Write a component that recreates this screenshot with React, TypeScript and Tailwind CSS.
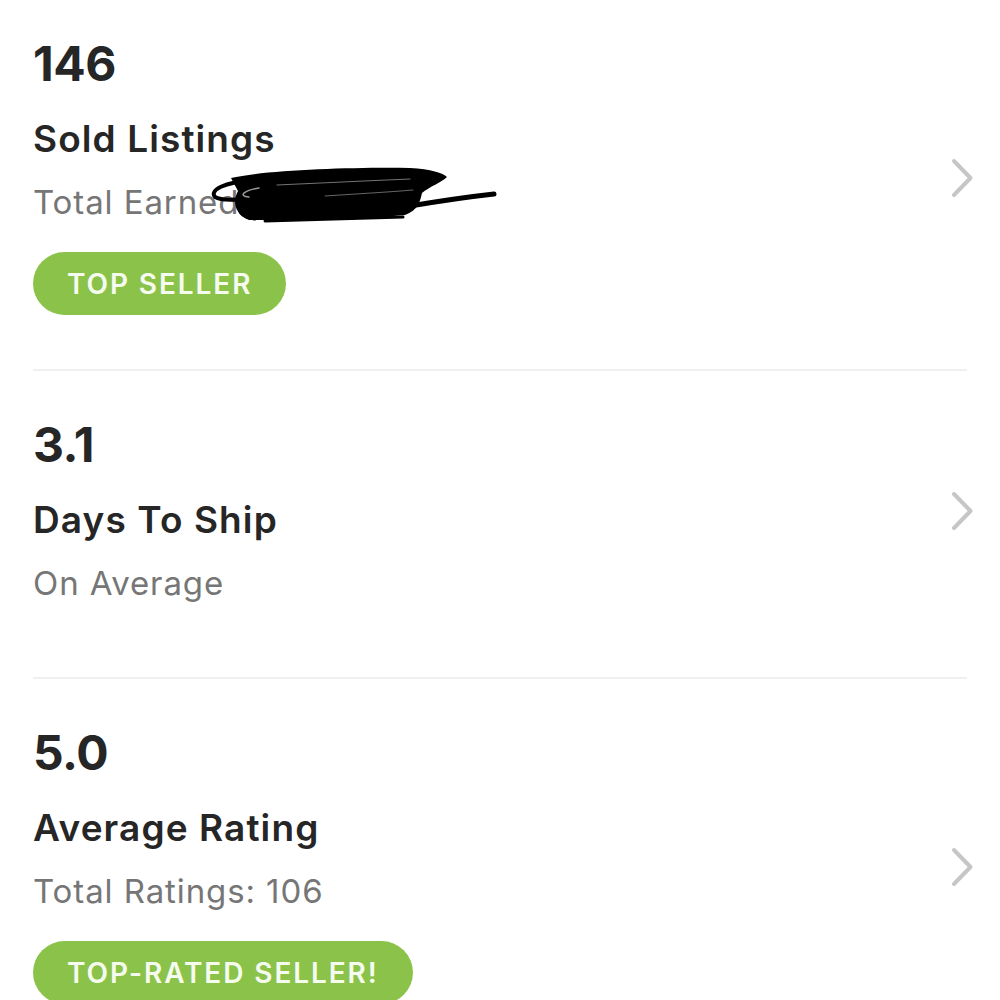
interface Stat {
  value: string;
  title: string;
  sub: string;
  badge?: string;
  redacted?: boolean;
}

const STATS: Stat[] = [
  { value: '146', title: 'Sold Listings', sub: 'Total Earned: $0', badge: 'TOP SELLER', redacted: true },
  { value: '3.1', title: 'Days To Ship', sub: 'On Average' },
  { value: '5.0', title: 'Average Rating', sub: 'Total Ratings: 106', badge: 'TOP-RATED SELLER!' },
];

// hand-drawn black redaction over the earnings amount
function Scribble() {
  return (
    <svg className="pointer-events-none absolute left-[172px] top-[-22px]" width="295" height="62" viewBox="0 0 295 62" fill="none">
      <path
        d="M26 14 C 60 6, 150 3, 205 4 C 226 5, 238 9, 242 13 C 237 18, 224 23, 217 29 C 215 38, 213 46, 200 51 C 160 55, 90 57, 44 56 C 30 50, 27 38, 33 27 Z"
        fill="#000"
      />
      <path d="M46 17 C 20 18, 4 26, 10 33 C 20 39, 52 34, 84 26" stroke="#000" strokeWidth="4" strokeLinecap="round" />
      <path d="M40 40 C 32 46, 36 52, 50 54" stroke="#000" strokeWidth="5" strokeLinecap="round" />
      <path d="M54 24 C 40 26, 32 32, 44 33" stroke="#fff" strokeWidth="1.5" strokeLinecap="round" opacity="0.6" />
      <path d="M72 21 C 110 19, 160 17, 205 15" stroke="#fff" strokeWidth="1.2" strokeLinecap="round" opacity="0.45" />
      <path d="M120 32 C 150 30, 185 28, 208 26" stroke="#fff" strokeWidth="1" strokeLinecap="round" opacity="0.4" />
      <path d="M205 42 C 235 37, 262 33, 289 30" stroke="#000" strokeWidth="5" strokeLinecap="round" />
      <path d="M60 57 C 120 55, 170 54, 198 53" stroke="#000" strokeWidth="3" strokeLinecap="round" />
    </svg>
  );
}

function Chevron() {
  return (
    <svg className="-mr-[7px] shrink-0" width="24" height="40" viewBox="0 0 24 40" fill="none">
      <path d="M4 3 L20.5 20 L4 37" stroke="#c6c6c6" strokeWidth="4" strokeLinecap="round" strokeLinejoin="round" />
    </svg>
  );
}

function StatRow({ stat, first }: { stat: Stat; first: boolean }) {
  return (
    <div
      className={`flex items-center border-b-2 border-[#f0f0f0] ${first ? 'pt-[40px]' : 'pt-[50px]'} ${stat.badge ? 'pb-[54px]' : 'pb-[77px]'}`}
    >
      <div className="flex-1 min-w-0">
        <div className="text-[48px] leading-[48px] font-bold tracking-[-0.5px] text-[#262626]">{stat.value}</div>
        <div className="mt-[32px] text-[37px] leading-[37px] font-semibold tracking-[1.1px] text-[#262626]">{stat.title}</div>
        <div className="relative mt-[29px] text-[33px] leading-[33px] tracking-[0.9px] text-[#767676]">
          {stat.sub}
          {stat.redacted && <Scribble />}
        </div>
        {stat.badge && (
          <div className="mt-[33px] inline-flex h-[63px] items-center rounded-full bg-[#8bc34a] px-[34px] text-[28px] font-semibold tracking-[1.9px] text-[#f6fbef]">
            {stat.badge}
          </div>
        )}
      </div>
      <Chevron />
    </div>
  );
}

export default function App() {
  return (
    <div className="h-[1000px] overflow-hidden bg-white px-[33px] font-['Inter',sans-serif]">
      {STATS.map((stat, i) => (
        <StatRow key={stat.title} stat={stat} first={i === 0} />
      ))}
    </div>
  );
}
